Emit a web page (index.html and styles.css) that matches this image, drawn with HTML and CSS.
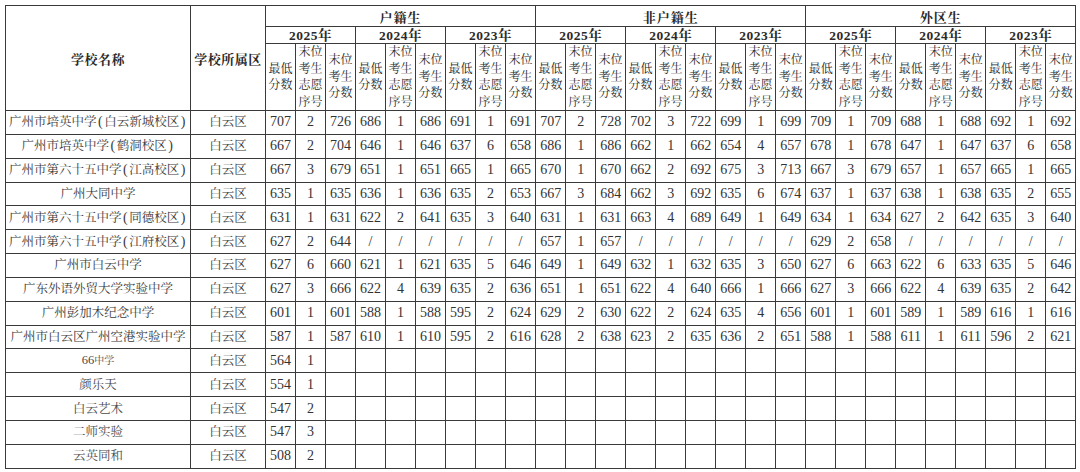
FILE: index.html
```html
<!DOCTYPE html>
<html lang="zh-CN">
<head>
<meta charset="utf-8">
<title>录取分数</title>
<link rel="stylesheet" href="styles.css">
</head>
<body>
<table class="score">
<colgroup>
<col class="c-name"><col class="c-dist">
<col><col><col><col><col><col><col><col><col>
<col><col><col><col><col><col><col><col><col>
<col><col><col><col><col><col><col><col><col>
</colgroup>
<thead>
<tr class="h1">
<th rowspan="3" class="hname">学校名称</th>
<th rowspan="3" class="hname">学校所属区</th>
<th colspan="9" class="grp">户籍生</th>
<th colspan="9" class="grp">非户籍生</th>
<th colspan="9" class="grp">外区生</th>
</tr>
<tr class="h2">
<th colspan="3" class="yr">2025年</th><th colspan="3" class="yr">2024年</th><th colspan="3" class="yr">2023年</th>
<th colspan="3" class="yr">2025年</th><th colspan="3" class="yr">2024年</th><th colspan="3" class="yr">2023年</th>
<th colspan="3" class="yr">2025年</th><th colspan="3" class="yr">2024年</th><th colspan="3" class="yr">2023年</th>
</tr>
<tr class="h3">
<th class="sub">最低分数</th><th class="sub">末位考生志愿序号</th><th class="sub">末位考生分数</th>
<th class="sub">最低分数</th><th class="sub">末位考生志愿序号</th><th class="sub">末位考生分数</th>
<th class="sub">最低分数</th><th class="sub">末位考生志愿序号</th><th class="sub">末位考生分数</th>
<th class="sub">最低分数</th><th class="sub">末位考生志愿序号</th><th class="sub">末位考生分数</th>
<th class="sub">最低分数</th><th class="sub">末位考生志愿序号</th><th class="sub">末位考生分数</th>
<th class="sub">最低分数</th><th class="sub">末位考生志愿序号</th><th class="sub">末位考生分数</th>
<th class="sub">最低分数</th><th class="sub">末位考生志愿序号</th><th class="sub">末位考生分数</th>
<th class="sub">最低分数</th><th class="sub">末位考生志愿序号</th><th class="sub">末位考生分数</th>
<th class="sub">最低分数</th><th class="sub">末位考生志愿序号</th><th class="sub">末位考生分数</th>
</tr>
</thead>
<tbody>
<tr><td class="nm">广州市培英中学<span class="p">(</span>白云新城校区<span class="p">)</span></td><td class="nm">白云区</td><td>707</td><td>2</td><td>726</td><td>686</td><td>1</td><td>686</td><td>691</td><td>1</td><td>691</td><td>707</td><td>2</td><td>728</td><td>702</td><td>3</td><td>722</td><td>699</td><td>1</td><td>699</td><td>709</td><td>1</td><td>709</td><td>688</td><td>1</td><td>688</td><td>692</td><td>1</td><td>692</td></tr>
<tr><td class="nm">广州市培英中学<span class="p">(</span>鹤洞校区<span class="p">)</span></td><td class="nm">白云区</td><td>667</td><td>2</td><td>704</td><td>646</td><td>1</td><td>646</td><td>637</td><td>6</td><td>658</td><td>686</td><td>1</td><td>686</td><td>662</td><td>1</td><td>662</td><td>654</td><td>4</td><td>657</td><td>678</td><td>1</td><td>678</td><td>647</td><td>1</td><td>647</td><td>637</td><td>6</td><td>658</td></tr>
<tr><td class="nm">广州市第六十五中学<span class="p">(</span>江高校区<span class="p">)</span></td><td class="nm">白云区</td><td>667</td><td>3</td><td>679</td><td>651</td><td>1</td><td>651</td><td>665</td><td>1</td><td>665</td><td>670</td><td>1</td><td>670</td><td>662</td><td>2</td><td>692</td><td>675</td><td>3</td><td>713</td><td>667</td><td>3</td><td>679</td><td>657</td><td>1</td><td>657</td><td>665</td><td>1</td><td>665</td></tr>
<tr><td class="nm">广州大同中学</td><td class="nm">白云区</td><td>635</td><td>1</td><td>635</td><td>636</td><td>1</td><td>636</td><td>635</td><td>2</td><td>653</td><td>667</td><td>3</td><td>684</td><td>662</td><td>3</td><td>692</td><td>635</td><td>6</td><td>674</td><td>637</td><td>1</td><td>637</td><td>638</td><td>1</td><td>638</td><td>635</td><td>2</td><td>655</td></tr>
<tr><td class="nm">广州市第六十五中学<span class="p">(</span>同德校区<span class="p">)</span></td><td class="nm">白云区</td><td>631</td><td>1</td><td>631</td><td>622</td><td>2</td><td>641</td><td>635</td><td>3</td><td>640</td><td>631</td><td>1</td><td>631</td><td>663</td><td>4</td><td>689</td><td>649</td><td>1</td><td>649</td><td>634</td><td>1</td><td>634</td><td>627</td><td>2</td><td>642</td><td>635</td><td>3</td><td>640</td></tr>
<tr><td class="nm">广州市第六十五中学<span class="p">(</span>江府校区<span class="p">)</span></td><td class="nm">白云区</td><td>627</td><td>2</td><td>644</td><td>/</td><td>/</td><td>/</td><td>/</td><td>/</td><td>/</td><td>657</td><td>1</td><td>657</td><td>/</td><td>/</td><td>/</td><td>/</td><td>/</td><td>/</td><td>629</td><td>2</td><td>658</td><td>/</td><td>/</td><td>/</td><td>/</td><td>/</td><td>/</td></tr>
<tr><td class="nm">广州市白云中学</td><td class="nm">白云区</td><td>627</td><td>6</td><td>660</td><td>621</td><td>1</td><td>621</td><td>635</td><td>5</td><td>646</td><td>649</td><td>1</td><td>649</td><td>632</td><td>1</td><td>632</td><td>635</td><td>3</td><td>650</td><td>627</td><td>6</td><td>663</td><td>622</td><td>6</td><td>633</td><td>635</td><td>5</td><td>646</td></tr>
<tr><td class="nm">广东外语外贸大学实验中学</td><td class="nm">白云区</td><td>627</td><td>3</td><td>666</td><td>622</td><td>4</td><td>639</td><td>635</td><td>2</td><td>636</td><td>651</td><td>1</td><td>651</td><td>622</td><td>4</td><td>640</td><td>666</td><td>1</td><td>666</td><td>627</td><td>3</td><td>666</td><td>622</td><td>4</td><td>639</td><td>635</td><td>2</td><td>642</td></tr>
<tr><td class="nm">广州彭加木纪念中学</td><td class="nm">白云区</td><td>601</td><td>1</td><td>601</td><td>588</td><td>1</td><td>588</td><td>595</td><td>2</td><td>624</td><td>629</td><td>2</td><td>630</td><td>622</td><td>2</td><td>624</td><td>635</td><td>4</td><td>656</td><td>601</td><td>1</td><td>601</td><td>589</td><td>1</td><td>589</td><td>616</td><td>1</td><td>616</td></tr>
<tr><td class="nm">广州市白云区广州空港实验中学</td><td class="nm">白云区</td><td>587</td><td>1</td><td>587</td><td>610</td><td>1</td><td>610</td><td>595</td><td>2</td><td>616</td><td>628</td><td>2</td><td>638</td><td>623</td><td>2</td><td>635</td><td>636</td><td>2</td><td>651</td><td>588</td><td>1</td><td>588</td><td>611</td><td>1</td><td>611</td><td>596</td><td>2</td><td>621</td></tr>
<tr><td class="nm light">66<span class="small">中学</span></td><td class="nm">白云区</td><td>564</td><td>1</td><td></td><td></td><td></td><td></td><td></td><td></td><td></td><td></td><td></td><td></td><td></td><td></td><td></td><td></td><td></td><td></td><td></td><td></td><td></td><td></td><td></td><td></td><td></td><td></td><td></td></tr>
<tr><td class="nm light">颜乐天</td><td class="nm">白云区</td><td>554</td><td>1</td><td></td><td></td><td></td><td></td><td></td><td></td><td></td><td></td><td></td><td></td><td></td><td></td><td></td><td></td><td></td><td></td><td></td><td></td><td></td><td></td><td></td><td></td><td></td><td></td><td></td></tr>
<tr><td class="nm light">白云艺术</td><td class="nm">白云区</td><td>547</td><td>2</td><td></td><td></td><td></td><td></td><td></td><td></td><td></td><td></td><td></td><td></td><td></td><td></td><td></td><td></td><td></td><td></td><td></td><td></td><td></td><td></td><td></td><td></td><td></td><td></td><td></td></tr>
<tr><td class="nm light">二师实验</td><td class="nm">白云区</td><td>547</td><td>3</td><td></td><td></td><td></td><td></td><td></td><td></td><td></td><td></td><td></td><td></td><td></td><td></td><td></td><td></td><td></td><td></td><td></td><td></td><td></td><td></td><td></td><td></td><td></td><td></td><td></td></tr>
<tr><td class="nm light">云英同和</td><td class="nm">白云区</td><td>508</td><td>2</td><td></td><td></td><td></td><td></td><td></td><td></td><td></td><td></td><td></td><td></td><td></td><td></td><td></td><td></td><td></td><td></td><td></td><td></td><td></td><td></td><td></td><td></td><td></td><td></td><td></td></tr>
</tbody>
</table>
</body>
</html>
```
FILE: styles.css
```css
html, body {
  margin: 0;
  padding: 0;
  background: #ffffff;
}
body {
  padding: 5px;
}
.score {
  border-collapse: collapse;
  table-layout: fixed;
  width: 1071px;
  font-family: "Liberation Serif", "Noto Serif CJK SC", "Noto Sans CJK SC", serif;
  font-size: 14px;
  color: #333333;
}
.score col {
  width: 30px;
}
.score col.c-name {
  width: 185px;
}
.score col.c-dist {
  width: 75px;
}
.score th,
.score td {
  border: 1px solid #3a3a3a;
  padding: 0;
  text-align: center;
  vertical-align: middle;
  overflow: hidden;
}
.score th {
  font-weight: normal;
  color: #2a2a2a;
}
.h1 {
  height: 21px;
}
.h2 {
  height: 17px;
}
.h3 {
  height: 66px;
}
.hname {
  font-size: 13px;
  font-weight: bold !important;
  letter-spacing: 0.5px;
}
.grp {
  font-size: 13px;
  font-weight: bold !important;
  letter-spacing: 1px;
}
.yr {
  font-size: 13.5px;
  font-weight: bold !important;
  line-height: 15px;
  letter-spacing: 0.5px;
}
.sub {
  font-size: 12px;
  line-height: 16.5px;
  color: #3a3a3a;
  word-break: break-all;
}
.score tbody tr {
  height: 23.85px;
}
.score td {
  line-height: 16px;
}
.nm {
  font-size: 12.5px;
  white-space: nowrap;
  color: #3a3a3a;
}
.p {
  font-size: 14px;
  margin: 0 1.5px;
}
.light {
  color: #4a4a4a;
}
.small {
  font-size: 10px;
}
```
